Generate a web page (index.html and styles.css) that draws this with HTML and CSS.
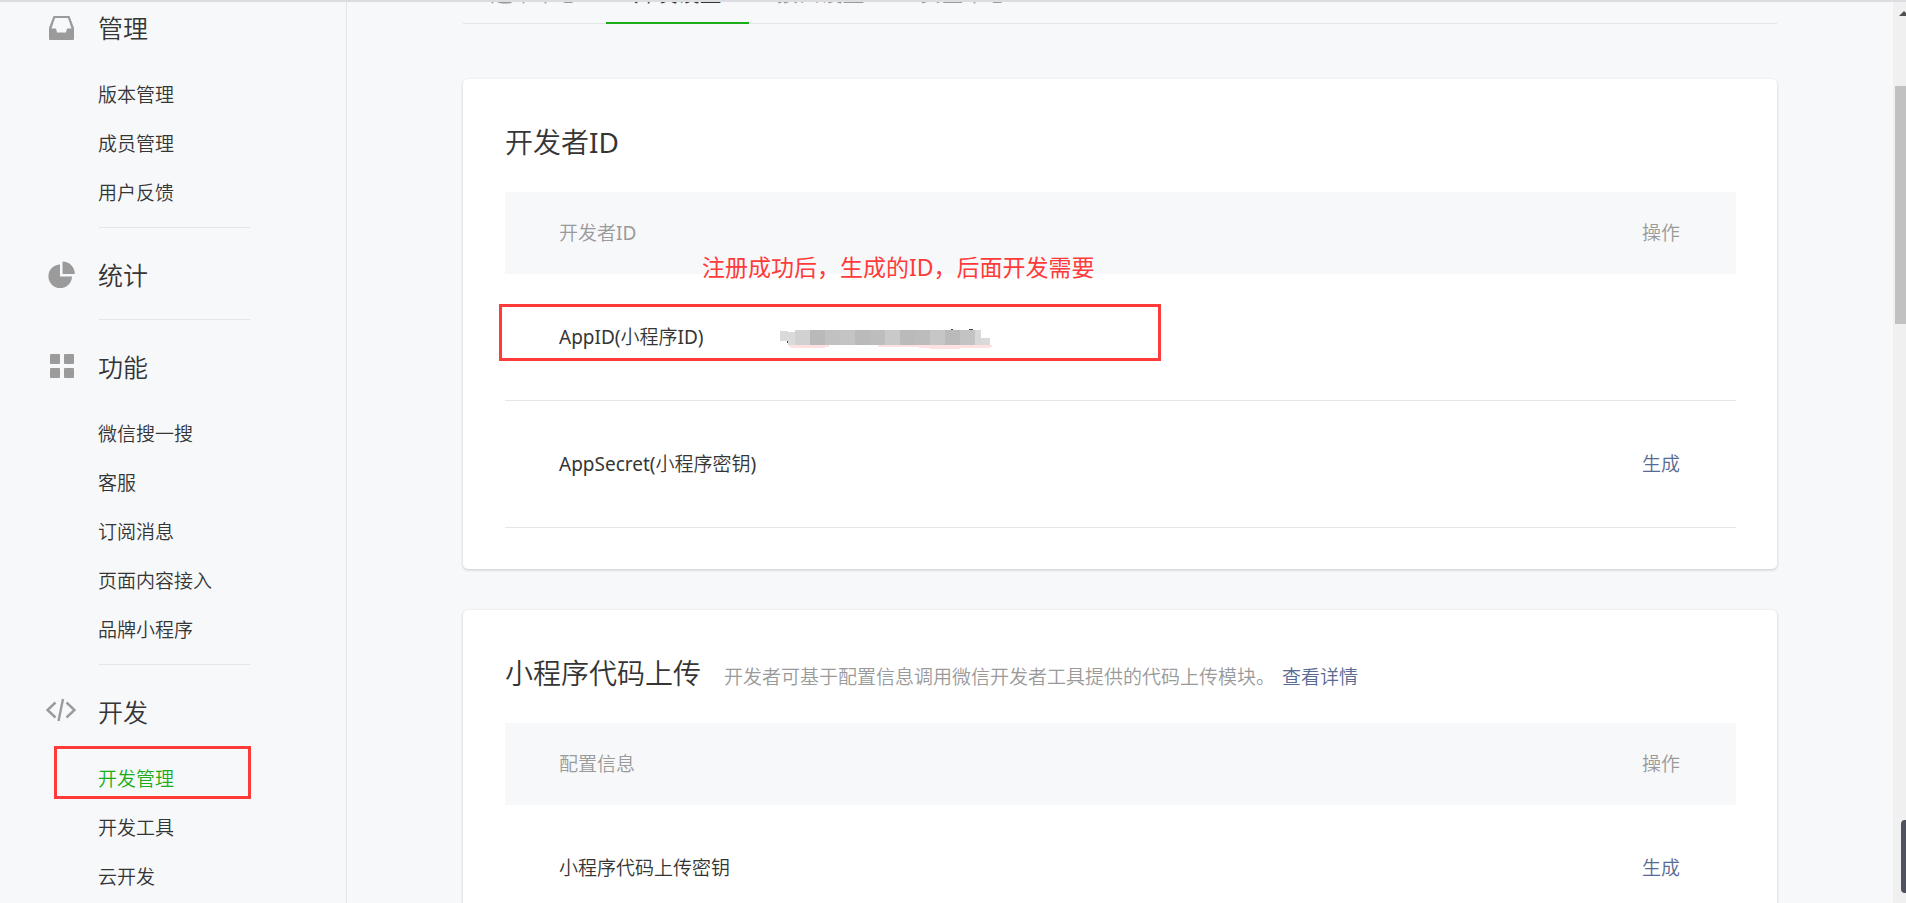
FILE: index.html
```html
<!DOCTYPE html>
<html lang="zh-CN">
<head>
<meta charset="utf-8">
<title>开发管理</title>
<link rel="stylesheet" href="styles.css">
</head>
<body>
<div class="page">
  <nav class="sidebar">
    <div class="menu">
      <section class="group">
        <h2 class="group-title">
          <svg class="icon" viewBox="0 0 30 30" aria-hidden="true"><path fill="#9b9b9b" fill-rule="evenodd" d="M7.500 3h16l4.500 12v11q0 1-1 1h-23q-1 0-1-1v-11zM9 5l-3.500 10.500h4.500l1 4h9l1-4h4.500l-3.500-10.500z"/></svg>
          管理
        </h2>
        <ul class="items">
          <li><a href="#">版本管理</a></li>
          <li><a href="#">成员管理</a></li>
          <li><a href="#">用户反馈</a></li>
        </ul>
      </section>
      <section class="group group-single">
        <h2 class="group-title">
          <svg class="icon" viewBox="0 0 30 30" aria-hidden="true"><path fill="#9b9b9b" d="M14 4.500v12h12a11.800 11.800 0 1 1-12-12zM16.500 1.500a12.300 12.300 0 0 1 12.300 12.500h-12.300z"/></svg>
          统计
        </h2>
      </section>
      <section class="group">
        <h2 class="group-title">
          <svg class="icon" viewBox="0 0 30 30" aria-hidden="true"><g fill="#9b9b9b"><rect x="4" y="2" width="10" height="10" rx="1"/><rect x="18" y="2" width="10" height="10" rx="1"/><rect x="4" y="16" width="10" height="10" rx="1"/><rect x="18" y="16" width="10" height="10" rx="1"/></g></svg>
          功能
        </h2>
        <ul class="items">
          <li><a href="#">微信搜一搜</a></li>
          <li><a href="#">客服</a></li>
          <li><a href="#">订阅消息</a></li>
          <li><a href="#">页面内容接入</a></li>
          <li><a href="#">品牌小程序</a></li>
        </ul>
      </section>
      <section class="group">
        <h2 class="group-title">
          <svg class="icon" viewBox="0 0 30 30" aria-hidden="true"><path fill="none" stroke="#9b9b9b" stroke-width="2.400" d="M9.500 5.500l-8 7.500 8 7.500M20.500 5.500l8 7.500-8 7.500M17 2l-4.500 22"/></svg>
          开发
        </h2>
        <ul class="items">
          <li class="marked"><a class="current" href="#">开发管理</a></li>
          <li><a href="#">开发工具</a></li>
          <li><a href="#">云开发</a></li>
        </ul>
      </section>
    </div>
  </nav>

  <main class="main">
    <div class="tabs">
      <a class="tab" href="#">运维中心</a>
      <a class="tab tab-active" href="#">开发设置</a>
      <a class="tab" href="#">接口设置</a>
      <a class="tab" href="#">安全中心</a>
    </div>

    <section class="card">
      <header class="card-head"><h3>开发者<span class="latin">ID</span></h3></header>
      <table class="grid">
        <colgroup><col class="col-name"><col><col class="col-action"></colgroup>
        <thead><tr><th colspan="2">开发者<span class="latin">ID</span></th><th>操作</th></tr></thead>
        <tbody>
          <tr>
            <td><span class="latin">AppID(</span>小程序<span class="latin">ID)</span></td>
            <td class="value">
              <svg class="mosaic" viewBox="0 -6 212 26" role="img" aria-label="已隐藏">
                <g fill="#ffe1e1"><rect x="9" y="15" width="40" height="2"/><rect x="11" y="17" width="34" height="1"/><rect x="98" y="15" width="114" height="2"/><rect x="139" y="17" width="71" height="1"/><rect x="150" y="18" width="30" height="1"/></g>
                <g fill="#444"><rect x="7" y="11" width="1" height="2"/><rect x="171" y="-1" width="2" height="1"/><rect x="189" y="-1" width="4" height="1"/></g>
                <rect x="0" y="1" width="8" height="10" fill="#dadada"/><rect x="8" y="2" width="7" height="13" fill="#dadada"/><rect x="15" y="0" width="15" height="15" fill="#d1d1d1"/><rect x="30" y="0" width="15" height="15" fill="#b9b9b9"/><rect x="45" y="0" width="15" height="15" fill="#c1c1c1"/><rect x="60" y="0" width="15" height="15" fill="#c4c4c4"/><rect x="75" y="0" width="15" height="15" fill="#bababa"/><rect x="90" y="0" width="15" height="15" fill="#bdbdbd"/><rect x="105" y="0" width="15" height="15" fill="#c9c9c9"/><rect x="120" y="0" width="15" height="15" fill="#bababa"/><rect x="135" y="0" width="15" height="15" fill="#bcbcbc"/><rect x="150" y="0" width="15" height="15" fill="#c6c6c6"/><rect x="165" y="0" width="15" height="15" fill="#bababa"/><rect x="180" y="0" width="15" height="15" fill="#c3c3c3"/><rect x="195" y="0" width="6" height="15" fill="#d8d8d8"/><rect x="201" y="8" width="9" height="7" fill="#dadada"/>
              </svg>
            </td>
            <td></td>
          </tr>
          <tr><td colspan="2"><span class="latin">AppSecret(</span>小程序密钥<span class="latin">)</span></td><td><a href="#">生成</a></td></tr>
        </tbody>
      </table>
      <p class="note">注册成功后，生成的ID，后面开发需要</p>
      <div class="note-box"></div>
    </section>

    <section class="card">
      <header class="card-head">
        <h3>小程序代码上传</h3>
        <p class="hint">开发者可基于配置信息调用微信开发者工具提供的代码上传模块。<a href="#">查看详情</a></p>
      </header>
      <table class="grid">
        <colgroup><col class="col-name"><col><col class="col-action"></colgroup>
        <thead><tr><th colspan="2">配置信息</th><th>操作</th></tr></thead>
        <tbody>
          <tr><td colspan="2">小程序代码上传密钥</td><td><a href="#">生成</a></td></tr>
        </tbody>
      </table>
    </section>
  </main>

  <div class="scroll-track" aria-hidden="true">
    <svg class="scroll-arrow" viewBox="0 0 7 5"><path fill="#505050" d="M0 5L5 0l2 2v3z"/></svg>
    <div class="scroll-thumb"></div>
    <div class="side-handle"></div>
  </div>
</div>
</body>
</html>
```
FILE: styles.css
```css
*, *::before, *::after { box-sizing: border-box; }

body {
  margin: 0;
  background: #f7f8fa;
  color: #353535;
  font-family: "Noto Sans", "Noto Sans CJK SC", sans-serif;
  font-size: 19px;
  font-weight: 350;
  line-height: 28px;
}

h2, h3, p, ul { margin: 0; padding: 0; font-weight: inherit; }
ul { list-style: none; }
a { color: #576b95; text-decoration: none; }
.latin { font-weight: 400; }

.page {
  display: flex;
  height: 100vh;
  overflow: hidden;
  border-top: 2px solid #dcdde0;
}

/* Sidebar */
.sidebar {
  flex: 0 0 347px;
  overflow: hidden;
  border-right: 1px solid #e4e5e8;
}
.menu { margin-top: -21px; }
.group { padding-top: 5px; }
.group:not(:last-child)::after {
  content: "";
  display: block;
  width: 151px;
  height: 1px;
  margin: 9px 0 0 99px;
  background: #e4e5e8;
}
.group.group-single::after { margin-top: 1px; }

.group-title {
  display: flex;
  align-items: center;
  gap: 22px;
  height: 85px;
  padding: 0 0 2px 46px;
  font-size: 25px;
}
.icon { width: 30px; height: 30px; }
.items li {
  position: relative;
  padding-left: 98px;
  line-height: 49px;
}
.items a { color: #353535; }
.items a.current { color: #1aad19; }
.marked::before {
  content: "";
  position: absolute;
  top: -9px;
  left: 54px;
  width: 197px;
  height: 53px;
  border: 3px solid #ff3b3a;
}

/* Main column */
.main {
  flex: 1;
  min-width: 0;
  padding: 0 116px;
}
.tabs {
  display: flex;
  height: 22px;
  margin-bottom: 55px;
  align-items: flex-end;
  border-bottom: 1px solid #e4e5e8;
}
.tab {
  min-width: 143px;
  margin-bottom: -1px;
  padding-bottom: 16px;
  border-bottom: 2px solid transparent;
  color: #9a9a9a;
  font-size: 22px;
  text-align: center;
}
.tab-active {
  border-color: #1aad19;
  color: #353535;
}

.card {
  position: relative;
  margin-bottom: 41px;
  padding: 0 41px 41px 42px;
  border-radius: 5px;
  background: #fff;
  box-shadow: 0 1px 3px rgba(0, 0, 0, 0.2);
}
.card-head {
  display: flex;
  align-items: baseline;
  gap: 23px;
  height: 113px;
  padding-top: 43px;
}
.card-head h3 {
  font-size: 28px;
  line-height: 40px;
}
.hint { color: #9a9a9a; }
.hint a { margin-left: 7px; }

.grid {
  width: 100%;
  border-spacing: 0;
  table-layout: fixed;
}
.col-name { width: 275px; }
.col-action { width: 148px; }
.grid th, .grid td {
  padding: 0 54px;
  font-weight: inherit;
  text-align: left;
}
.grid th {
  height: 82px;
  background: #f7f8fa;
  color: #9a9a9a;
}
.grid td {
  height: 127px;
  border-bottom: 1px solid #e4e5e8;
}
.grid td:first-child { padding-right: 0; }
.grid .value { padding: 0; }
.mosaic {
  display: block;
  width: 212px;
  height: 26px;
}

/* Annotations over the first card */
.note {
  position: absolute;
  top: 174px;
  left: 239px;
  color: #ff3b3a;
  font-size: 23px;
  font-weight: 400;
}
.note-box {
  position: absolute;
  top: 225px;
  left: 36px;
  width: 662px;
  height: 57px;
  border: 3px solid #ff3b3a;
}

/* Scrollbar */
.scroll-track {
  position: relative;
  flex: 0 0 13px;
  display: flex;
  flex-direction: column;
  align-items: flex-end;
  background: #f0f0f0;
}
.scroll-arrow {
  width: 7px;
  height: 5px;
  margin: 9px 0 70px;
}
.scroll-thumb {
  width: 11px;
  height: 238px;
  background: #c1c1c1;
}
.side-handle {
  position: absolute;
  right: 0;
  bottom: 10px;
  width: 5px;
  height: 73px;
  border-radius: 4px 0 0 4px;
  background: #50515f;
}
```
